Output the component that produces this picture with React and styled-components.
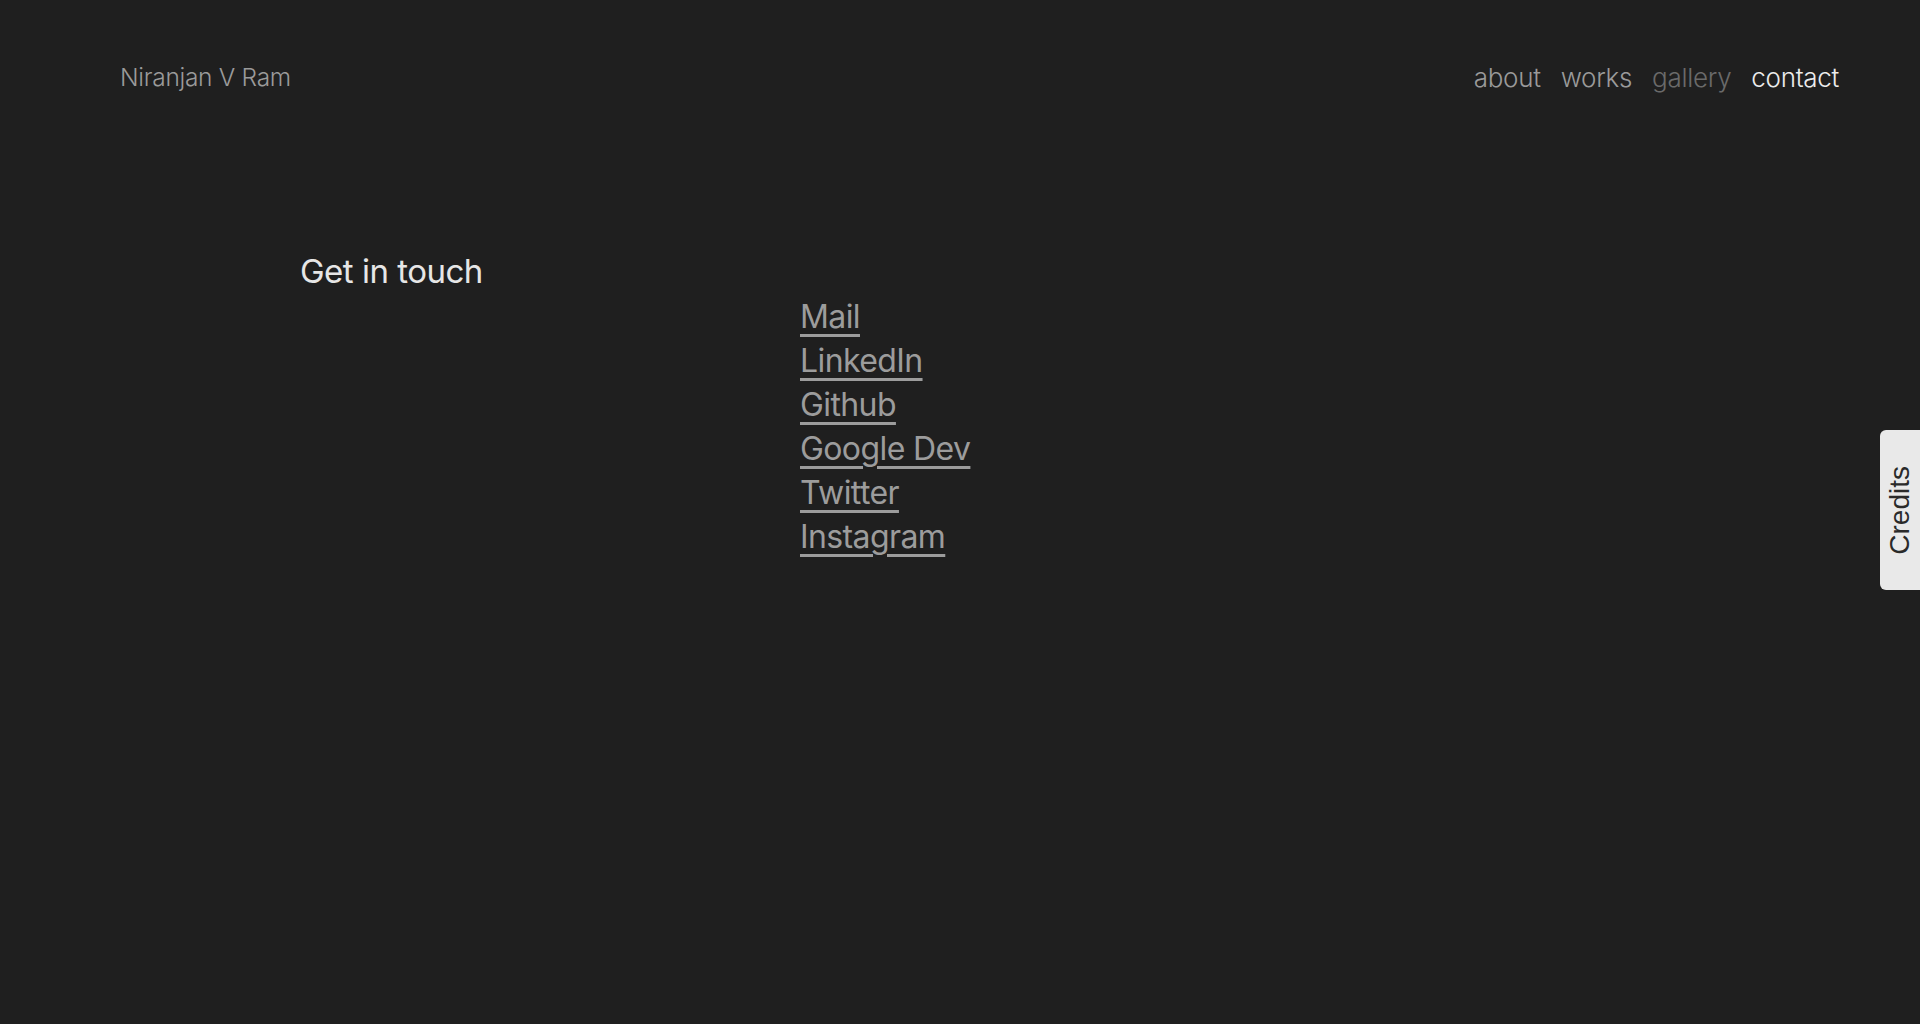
import React from 'react'
import styled, { createGlobalStyle } from 'styled-components'

const GlobalStyle = createGlobalStyle`
    html, body {
        margin: 0;
        padding: 0;
        background: #1f1f1f;
        font-family: Inter, "Noto Sans", sans-serif;
    }
`;

const Page = styled.div`
    min-height: 1024px;
    background: #1f1f1f;
    position: relative;
    overflow: hidden;
`;

const Header = styled.header`
    display: flex;
    align-items: center;
    justify-content: space-between;
    height: 154px;
    padding: 0 81px 0 120px;
    box-sizing: border-box;
`;

const Brand = styled.a`
    color: #9a9a9a;
    font-size: 24.5px;
    font-weight: 300;
    letter-spacing: -0.3px;
    text-decoration: none;
`;

const Nav = styled.nav`
    display: flex;
    gap: 20px;
`;

const NavLink = styled.a`
    color: ${p => p.$active ? '#ececec' : p.$dim ? '#6a6a6a' : '#9a9a9a'};
    font-size: 26px;
    font-weight: 300;
    letter-spacing: -0.3px;
    text-decoration: none;
`;

const Content = styled.section`
    display: grid;
    grid-template-columns: 500px auto;
    padding: 95px 0 0 300px;
`;

const Heading = styled.h2`
    margin: 0;
    color: #e6e6e6;
    font-size: 33px;
    font-weight: 400;
    letter-spacing: -0.5px;
    line-height: 44px;
`;

const LinkList = styled.ul`
    list-style: none;
    margin: 0;
    padding: 46px 0 0;
    display: flex;
    flex-direction: column;
`;

const ContactLink = styled.a`
    color: #9c9c9c;
    font-size: 32px;
    font-weight: 400;
    letter-spacing: -0.6px;
    line-height: 44px;
    text-decoration: underline;
    text-decoration-thickness: 3px;
    text-underline-offset: 6px;
`;

const CreditsTab = styled.button`
    position: fixed;
    right: 0;
    top: 430px;
    width: 40px;
    height: 160px;
    border: none;
    border-radius: 6px 0 0 6px;
    background: #e9e9e9;
    padding: 0;
    display: flex;
    align-items: center;
    justify-content: center;
    cursor: pointer;
`;

const CreditsText = styled.span`
    color: #2a2a2a;
    font-family: "Liberation Sans", Arial, sans-serif;
    font-size: 28px;
    writing-mode: vertical-rl;
    transform: rotate(180deg);
`;

const links = ['Mail', 'LinkedIn', 'Github', 'Google Dev', 'Twitter', 'Instagram'];

const App = () => {
    return (
        <Page>
            <GlobalStyle />
            <Header>
                <Brand href="#">Niranjan V Ram</Brand>
                <Nav>
                    <NavLink href="#">about</NavLink>
                    <NavLink href="#">works</NavLink>
                    <NavLink href="#" $dim>gallery</NavLink>
                    <NavLink href="#" $active>contact</NavLink>
                </Nav>
            </Header>
            <Content>
                <Heading>Get in touch</Heading>
                <LinkList>
                    {links.map((item) => (
                        <li key={item}>
                            <ContactLink href="#">{item}</ContactLink>
                        </li>
                    ))}
                </LinkList>
            </Content>
            <CreditsTab>
                <CreditsText>Credits</CreditsText>
            </CreditsTab>
        </Page>
    )
}

export default App
